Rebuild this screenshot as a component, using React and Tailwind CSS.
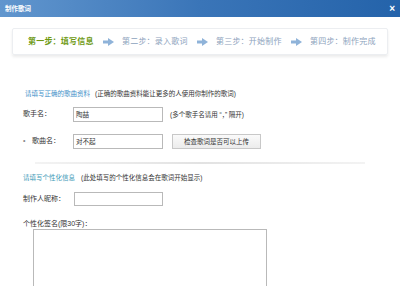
import React from "react";

const font = { fontFamily: '"Liberation Sans", "Noto Sans CJK SC", sans-serif' };

function Arrow() {
  return (
    <svg width="11" height="8" viewBox="0 0 11 8" className="mx-[8px] shrink-0">
      <path d="M0 2.5h5V0l6 4-6 4V5.5H0z" fill="#8fb3d9" />
    </svg>
  );
}

function Step({ text, active }) {
  return (
    <span
      className={
        active
          ? "w-[67px] shrink-0 text-[8px] font-bold text-[#6f9a14] tracking-[0.2px]"
          : "w-[67px] shrink-0 text-[8px] text-[#8da3bd] tracking-[0.2px]"
      }
    >
      {text}
    </span>
  );
}

export default function App() {
  return (
    <div className="w-[400px] h-[286px] overflow-hidden bg-white text-[#333]" style={font}>
      {/* title bar */}
      <div className="h-[17px] flex items-center justify-between px-[5px] bg-gradient-to-r from-[#6196ce] via-[#3a75b8] to-[#2463aa]">
        <span className="text-[6.5px] font-bold text-white">制作歌词</span>
        <span className="text-[10px] font-bold text-white leading-none">×</span>
      </div>

      {/* steps */}
      <div className="mx-[12px] mt-[11px] h-[27px] flex items-center pl-[15px] border border-[#eceef1] shadow-[0_2px_3px_rgba(0,0,0,0.08)] rounded-[2px]">
        <Step text="第一步：填写信息" active />
        <Arrow />
        <Step text="第二步：录入歌词" />
        <Arrow />
        <Step text="第三步：开始制作" />
        <Arrow />
        <Step text="第四步：制作完成" />
      </div>

      {/* section 1 */}
      <div className="mt-[34px] pl-[25px] flex items-center gap-[5px] text-[6.5px] h-[10px]">
        <span className="text-[#3f8fc8]">请填写正确的歌曲资料</span>
        <span className="text-[#333]">(正确的歌曲资料能让更多的人使用你制作的歌词)</span>
      </div>

      <div className="mt-[8px] pl-[23px] flex items-center h-[15px]">
        <span className="w-[50px] text-[7px]">歌手名：</span>
        <div className="w-[90px] h-[15px] border border-[#b9b9b9] flex items-center px-[2px] text-[6.5px]">陶喆</div>
        <span className="ml-[7px] text-[6.5px]">(多个歌手名请用 “，” 隔开)</span>
      </div>

      <div className="mt-[12px] pl-[23px] flex items-center h-[15px]">
        <span className="w-[50px] text-[7px] flex items-center">
          <span className="w-[9px] text-[#888]">•</span>歌曲名：
        </span>
        <div className="w-[90px] h-[15px] border border-[#b9b9b9] flex items-center px-[2px] text-[6.5px]">对不起</div>
        <div className="ml-[9px] w-[89px] h-[15px] border border-[#c8c8c8] bg-gradient-to-b from-[#fafafa] to-[#ececec] flex items-center justify-center text-[6.5px]">
          检查歌词是否可以上传
        </div>
      </div>

      <div className="mt-[13px] mx-[35px] h-[2px] bg-gradient-to-r from-[#f3f3f3] via-[#e2e2e2] to-[#f3f3f3]" />

      {/* section 2 */}
      <div className="mt-[9px] pl-[23px] flex items-center gap-[6px] text-[6.5px] h-[10px]">
        <span className="text-[#3f9bb8]">请填写个性化信息</span>
        <span className="text-[#333]">(此处填写的个性化信息会在歌词开始显示)</span>
      </div>

      <div className="mt-[9px] pl-[23px] flex items-center h-[14px]">
        <span className="w-[51px] text-[7px]">制作人昵称：</span>
        <div className="w-[89px] h-[14px] border border-[#b9b9b9]" />
      </div>

      <div className="mt-[13px] pl-[23px] text-[7px] h-[10px] flex items-center">个性化签名(限30字)：</div>

      <div className="mt-[0px] ml-[33px] w-[234px] h-[70px] border border-[#b9b9b9]" />
    </div>
  );
}
